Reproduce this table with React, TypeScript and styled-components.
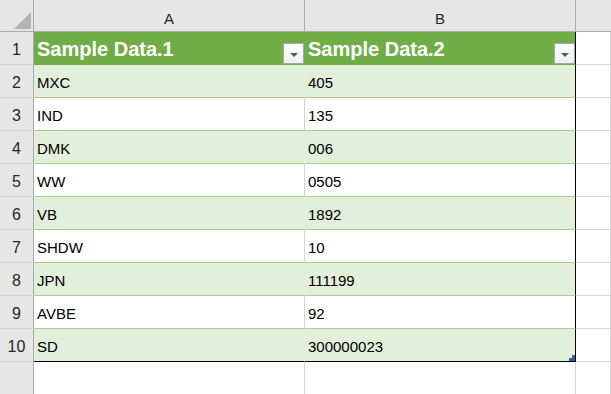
import React from "react";
import styled, { createGlobalStyle, css } from "styled-components";

const GlobalStyle = createGlobalStyle`
  html, body {
    margin: 0;
    padding: 0;
    background: #ffffff;
    overflow: hidden;
  }
  body {
    font-family: "Liberation Sans", Arial, sans-serif;
  }
`;

const COLORS = {
  green: "#70ad47",
  band: "#e2efda",
  rowLine: "#a9d08e",
  grid: "#d4d4d4",
  headerBg: "#e6e6e6",
  headerLine: "#ababab",
};

const Sheet = styled.div`
  width: 611px;
  height: 394px;
  overflow: hidden;
  display: flex;
  flex-direction: column;
`;

const Row = styled.div<{ $height: number }>`
  display: grid;
  grid-template-columns: 34px 271px 271px 1fr;
  height: ${(p) => p.$height}px;
  flex-shrink: 0;
`;

const Corner = styled.div`
  background: ${COLORS.headerBg};
  border-right: 1px solid ${COLORS.headerLine};
  border-bottom: 1px solid ${COLORS.headerLine};
  display: flex;
  align-items: flex-end;
  justify-content: flex-end;
  padding: 0 2px 2px 0;
`;

const ColHeader = styled.div<{ $last?: boolean }>`
  background: ${COLORS.headerBg};
  border-bottom: 1px solid ${COLORS.headerLine};
  border-right: ${(p) => (p.$last ? "none" : `1px solid ${COLORS.headerLine}`)};
  display: flex;
  align-items: center;
  justify-content: center;
  padding-top: 6px;
  font-size: 15px;
  color: #262626;
`;

const RowHeader = styled.div`
  background: ${COLORS.headerBg};
  border-right: 1px solid ${COLORS.headerLine};
  border-bottom: 1px solid ${COLORS.grid};
  display: flex;
  align-items: flex-end;
  justify-content: center;
  padding-bottom: 5px;
  font-size: 16px;
  color: #262626;
`;

type Variant = "title" | "band" | "plain" | "empty";

const Cell = styled.div<{ $variant: Variant; $edge?: boolean; $bottom?: boolean }>`
  position: relative;
  display: flex;
  align-items: flex-end;
  padding: 0 0 6px 3px;
  font-size: 15px;
  color: #000;
  ${(p) =>
    p.$variant === "title" &&
    css`
      background: ${COLORS.green};
      color: #ffffff;
      font-weight: bold;
      font-size: 20px;
      padding: 0 0 3px 3px;
      border-bottom: 1px solid ${COLORS.green};
      border-right: 1px solid ${COLORS.green};
    `}
  ${(p) =>
    p.$variant === "band" &&
    css`
      background: ${COLORS.band};
      border-bottom: 1px solid ${COLORS.rowLine};
      border-right: 1px solid ${COLORS.band};
    `}
  ${(p) =>
    p.$variant === "plain" &&
    css`
      background: #ffffff;
      border-bottom: 1px solid ${COLORS.rowLine};
      border-right: 1px solid ${COLORS.grid};
    `}
  ${(p) =>
    p.$variant === "empty" &&
    css`
      background: #ffffff;
      border-bottom: 1px solid ${COLORS.grid};
      border-right: 1px solid ${COLORS.grid};
    `}
  ${(p) => p.$edge && css`border-right: 1px solid #000;`}
  ${(p) => p.$bottom && css`border-bottom: 1px solid #000;`}
`;

const CellText = styled.span`
  flex: 1;
  white-space: nowrap;
`;

const FilterButton = styled.div`
  align-self: flex-end;
  width: 21px;
  height: 21px;
  margin-bottom: -3px;
  box-sizing: border-box;
  border: 1px solid #a6a6a6;
  background: linear-gradient(#ffffff, #eef0f3);
  display: flex;
  align-items: center;
  justify-content: center;
  padding-top: 2px;
`;

const Arrow = styled.div`
  width: 0;
  height: 0;
  border-left: 4px solid transparent;
  border-right: 4px solid transparent;
  border-top: 4px solid #595959;
`;

const ResizeHandle = styled.svg`
  position: absolute;
  right: 0;
  bottom: 0;
`;

const rows: [string, string][] = [
  ["MXC", "405"],
  ["IND", "135"],
  ["DMK", "006"],
  ["WW", "0505"],
  ["VB", "1892"],
  ["SHDW", "10"],
  ["JPN", "111199"],
  ["AVBE", "92"],
  ["SD", "300000023"],
];

export default function App() {
  return (
    <>
      <GlobalStyle />
      <Sheet>
        <Row $height={32}>
          <Corner>
            <svg width="17" height="17" viewBox="0 0 17 17">
              <polygon points="0,17 17,17 17,0" fill="#b4b4b4" />
            </svg>
          </Corner>
          <ColHeader>A</ColHeader>
          <ColHeader>B</ColHeader>
          <ColHeader $last />
        </Row>

        <Row $height={33}>
          <RowHeader>1</RowHeader>
          <Cell $variant="title">
            <CellText>Sample Data.1</CellText>
            <FilterButton>
              <Arrow />
            </FilterButton>
          </Cell>
          <Cell $variant="title" $edge>
            <CellText>Sample Data.2</CellText>
            <FilterButton>
              <Arrow />
            </FilterButton>
          </Cell>
          <Cell $variant="empty" />
        </Row>

        {rows.map(([a, b], i) => {
          const variant: Variant = i % 2 === 0 ? "band" : "plain";
          const last = i === rows.length - 1;
          return (
            <Row $height={33} key={a}>
              <RowHeader>{i + 2}</RowHeader>
              <Cell $variant={variant} $bottom={last}>
                <CellText>{a}</CellText>
              </Cell>
              <Cell $variant={variant} $edge $bottom={last}>
                <CellText>{b}</CellText>
                {last && (
                  <ResizeHandle width="6" height="6" viewBox="0 0 6 6">
                    <polygon points="3,0 6,0 6,6 0,6 0,3 3,3" fill="#3b5aa8" />
                  </ResizeHandle>
                )}
              </Cell>
              <Cell $variant="empty" />
            </Row>
          );
        })}

        <Row $height={33}>
          <RowHeader />
          <Cell $variant="empty" />
          <Cell $variant="empty" />
          <Cell $variant="empty" />
        </Row>
      </Sheet>
    </>
  );
}
